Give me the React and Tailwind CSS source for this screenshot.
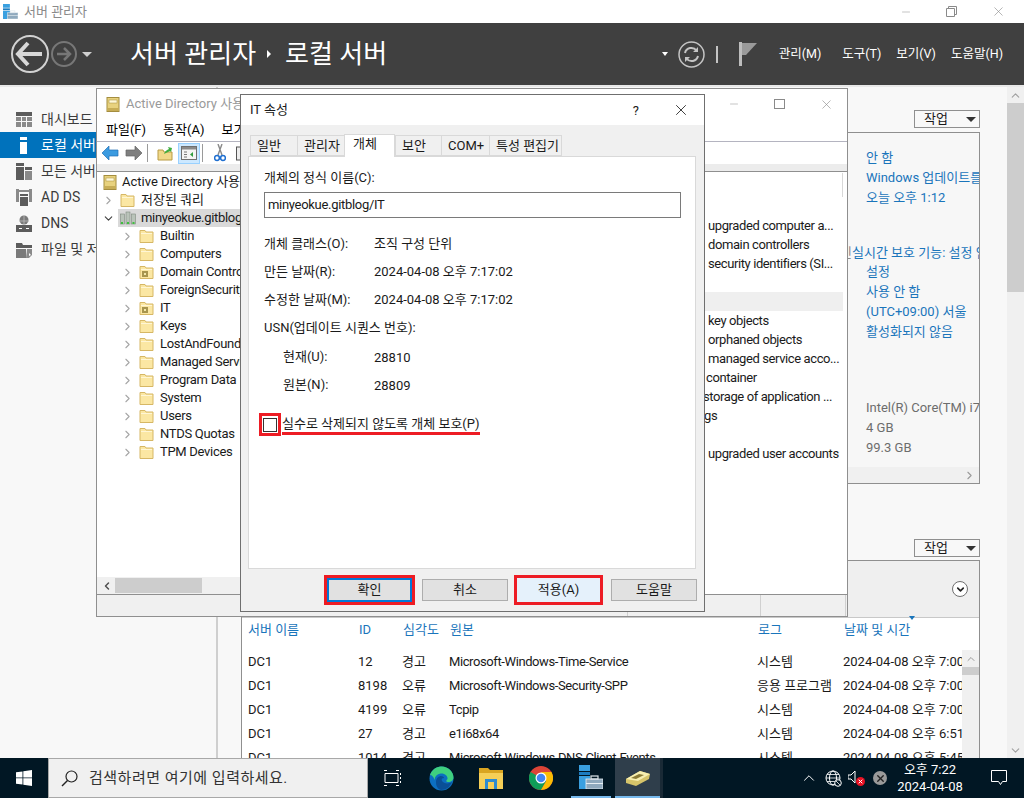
import { ChevronRight, ChevronDown, ChevronUp, ChevronLeft, X, Minus } from 'lucide-react';

const navItems = [
  { label: '대시보드', icon: 'dash' },
  { label: '로컬 서버', icon: 'local', active: true },
  { label: '모든 서버', icon: 'all' },
  { label: 'AD DS', icon: 'ad' },
  { label: 'DNS', icon: 'dns' },
  { label: '파일 및 저장소 서비스', icon: 'file' },
];

const treeItems = [
  { label: 'Builtin' },
  { label: 'Computers' },
  { label: 'Domain Controllers', ou: true },
  { label: 'ForeignSecurityPrincipals' },
  { label: 'IT', ou: true },
  { label: 'Keys' },
  { label: 'LostAndFound' },
  { label: 'Managed Service Accounts' },
  { label: 'Program Data' },
  { label: 'System' },
  { label: 'Users' },
  { label: 'NTDS Quotas' },
  { label: 'TPM Devices' },
];

// rows of the list pane; most of each row sits under the dialog
const listRows = [
  { text: 'upgraded computer a...', cls: 'pl-[3px]' },
  { text: 'domain controllers', cls: 'pl-[3px]' },
  { text: 'security identifiers (SI...', cls: 'pl-[3px]' },
  { text: '', cls: '' },
  { text: '', cls: 'bg-[#efefef]' },
  { text: 'key objects', cls: 'pl-[3px]' },
  { text: 'orphaned objects', cls: 'pl-[3px]' },
  { text: 'managed service acco...', cls: 'pl-[3px]' },
  { text: 'container', cls: 'pl-[1px]' },
  { text: 'storage of application ...', cls: '-ml-[2px]' },
  { text: 'gs', cls: '-ml-[1px]' },
  { text: '', cls: '' },
  { text: 'upgraded user accounts', cls: 'pl-[3px]' },
];

const events = [
  ['DC1', '12', '경고', 'Microsoft-Windows-Time-Service', '시스템', '2024-04-08 오후 7:00:12'],
  ['DC1', '8198', '오류', 'Microsoft-Windows-Security-SPP', '응용 프로그램', '2024-04-08 오후 7:00:05'],
  ['DC1', '4199', '오류', 'Tcpip', '시스템', '2024-04-08 오후 7:00:03'],
  ['DC1', '27', '경고', 'e1i68x64', '시스템', '2024-04-08 오후 6:51:10'],
  ['DC1', '1014', '경고', 'Microsoft-Windows-DNS-Client-Events', '시스템', '2024-04-08 오후 5:45:20'],
];

function NavIcon({ type }) {
  const c = '#5c5c5c';
  return (
    <svg width="17" height="17" viewBox="0 0 17 17">
      {type === 'dash' && (
        <>
          <rect x="0" y="1" width="16" height="4" fill={c} />
          <rect x="0" y="6" width="5" height="4" fill="#8a8a8a" />
          <rect x="6" y="6" width="4" height="4" fill="#8a8a8a" />
          <rect x="11" y="6" width="5" height="4" fill="#8a8a8a" />
          <rect x="0" y="11" width="5" height="5" fill="#8a8a8a" />
          <rect x="6" y="11" width="4" height="5" fill="#8a8a8a" />
          <rect x="11" y="11" width="5" height="5" fill="#8a8a8a" />
        </>
      )}
      {type === 'local' && (
        <>
          <rect x="4" y="0" width="7" height="3" fill="#fff" />
          <rect x="4" y="5" width="7" height="12" fill="#fff" />
        </>
      )}
      {type === 'all' && (
        <>
          <rect x="0" y="0" width="8" height="3" fill={c} />
          <rect x="0" y="4" width="8" height="13" fill={c} />
          <rect x="9" y="4" width="7" height="3" fill={c} />
          <rect x="9" y="8" width="7" height="9" fill="#8a8a8a" />
        </>
      )}
      {type === 'ad' && (
        <>
          <rect x="0" y="0" width="3" height="13" fill="#8a8a8a" />
          <rect x="13" y="0" width="3" height="13" fill="#8a8a8a" />
          <rect x="3" y="1" width="10" height="2" fill="#8a8a8a" />
          <rect x="4" y="5" width="8" height="2" fill={c} />
          <rect x="4" y="8" width="8" height="9" fill={c} />
        </>
      )}
      {type === 'dns' && (
        <>
          <circle cx="8" cy="5" r="4.5" fill="#7a7a7a" />
          <path d="M3 6h10M8 1v8" stroke="#bdbdbd" strokeWidth="0.8" />
          <rect x="0" y="10" width="16" height="7" fill={c} />
          <rect x="3" y="13" width="3" height="1" fill="#fff" />
          <rect x="10" y="13" width="3" height="1" fill="#fff" />
        </>
      )}
      {type === 'file' && (
        <>
          <path d="M0 2h6l1 2h9v3H0z" fill={c} />
          <rect x="0" y="8" width="10" height="9" fill="#7a7a7a" />
          <path d="M11 8h5v6l-3 3h-3z" fill="#8a8a8a" />
          <path d="M13 12l2 2-2 1z" fill="#fff" />
        </>
      )}
    </svg>
  );
}

function ServerIcon({ size = 15 }) {
  return (
    <svg width={size} height={size} viewBox="0 0 24 24">
      <rect x="0" y="0" width="11" height="6" fill="#3aa0e0" />
      <rect x="0" y="7" width="11" height="3" fill="#1c7cc0" />
      <rect x="0" y="11" width="11" height="13" fill="#3aa0e0" />
      <rect x="7" y="14" width="17" height="10" fill="#8fa9bd" stroke="#e6eef3" strokeWidth="0.8" />
      <rect x="12" y="11" width="7" height="3" fill="none" stroke="#dfe7ec" strokeWidth="1.2" />
      <rect x="7" y="18" width="17" height="1" fill="#e6eef3" />
    </svg>
  );
}

function Folder({ ou }) {
  return (
    <svg width="15" height="14" viewBox="0 0 15 14" className="shrink-0">
      <path d="M1 3V1.5h5L7 3h7v10.5H1z" fill="#fbe7a3" stroke="#d6b765" />
      <path d="M2 4.5h11" stroke="#fff6d5" />
      {ou && (
        <>
          <rect x="3" y="6" width="6" height="6" fill="#a8954e" />
          <rect x="5" y="8" width="2" height="2" fill="#f3e7a9" />
        </>
      )}
    </svg>
  );
}

function BookIcon() {
  return (
    <svg width="14" height="15" viewBox="0 0 14 15">
      <rect x="1" y="0.5" width="12" height="14" fill="#e8d27e" stroke="#a48d3f" />
      <rect x="3" y="3" width="8" height="3" fill="#fff9d8" stroke="#a48d3f" strokeWidth="0.5" />
      <rect x="1" y="11" width="12" height="3" fill="#c7ad56" />
    </svg>
  );
}

function Toolbar() {
  return (
    <div className="h-[23px] flex items-center pl-[5px] bg-white border-t border-[#b4b4c0]">
      <svg width="17" height="16" viewBox="0 0 17 16">
        <path d="M0 8l7-7v4h9v6H7v4z" fill="#3b9be0" stroke="#1f6fb5" strokeWidth="0.7" />
      </svg>
      <svg width="17" height="16" viewBox="0 0 17 16" className="ml-[6px]">
        <path d="M17 8l-7-7v4H1v6h9v4z" fill="#7f7f7f" stroke="#666" strokeWidth="0.7" />
      </svg>
      <div className="w-px h-[18px] bg-[#9a9a9a] ml-[5px]" />
      <svg width="16" height="16" viewBox="0 0 16 16" className="ml-[9px]">
        <path d="M1 5h5l1 2h8v8H1z" fill="#f1d98a" stroke="#b99b44" />
        <path d="M7 9c1-3 3-4 5-5l-1-2 4 1-1 4-1-1c-2 1-4 2-6 3z" fill="#3fae3f" />
      </svg>
      <div className="w-[22px] h-[21px] ml-[5px] bg-[#cce8ff] border border-[#99d1ff] flex items-center justify-center">
        <svg width="16" height="14" viewBox="0 0 16 14">
          <rect x="0.5" y="0.5" width="15" height="13" fill="#f4f4f4" stroke="#6f6f6f" />
          <rect x="1" y="1" width="14" height="2.5" fill="#8a8a8a" />
          <path d="M3 6h3M3 8.5h3M3 11h3" stroke="#777" />
          <path d="M12 6v5l-3-2.5z" fill="#2f9e3f" />
        </svg>
      </div>
      <div className="w-px h-[18px] bg-[#9a9a9a] ml-[2px]" />
      <svg width="12" height="18" viewBox="0 0 12 18" className="ml-[11px]">
        <path d="M8 0L4 11M4 0l4 11" stroke="#8a8a8a" strokeWidth="1.4" />
        <circle cx="3" cy="14" r="2.4" fill="none" stroke="#1f6fd0" strokeWidth="1.5" />
        <circle cx="9" cy="14" r="2.4" fill="none" stroke="#1f6fd0" strokeWidth="1.5" />
      </svg>
      <svg width="12" height="16" viewBox="0 0 12 16" className="ml-[10px]">
        <rect x="0.5" y="2" width="11" height="13" fill="#eee" stroke="#555" />
      </svg>
    </div>
  );
}

function ActiveDirectoryWindow() {
  return (
    <div className="absolute left-[96px] top-[88px] w-[752px] h-[529px] bg-[#f0f0f0] border border-[#8f8f8f] flex flex-col">
      <div className="h-[30px] bg-white flex items-center pl-[9px] text-[#9a9a9a]">
        <BookIcon />
        <span className="ml-[6px] whitespace-nowrap">Active Directory 사용자 및 컴퓨터</span>
        <div className="ml-auto flex items-center text-[#8a8a8a]">
          <Minus size={12} strokeWidth={1} />
          <div className="w-[11px] h-[10px] border border-[#8a8a8a] ml-[34px]" />
          <X size={15} strokeWidth={1} className="ml-[34px] mr-[13px]" />
        </div>
      </div>
      <div className="h-[22px] bg-white flex items-center gap-[17px] pl-[9px] text-black">
        <span>파일(F)</span>
        <span>동작(A)</span>
        <span>보기(V)</span>
      </div>
      <Toolbar />
      <div className="h-[7px] bg-[#ececec]" />
      <div className="h-[423px] flex bg-white border-t border-[#8f8f8f] border-l-0">
        <div className="flex-1 min-w-0 flex flex-col">
          <div className="flex-1 overflow-hidden pt-[1px] text-[#1a1a1a]">
            <div className="h-[18px] flex items-center pl-[6px] whitespace-nowrap">
              <BookIcon />
              <span className="ml-[5px]">Active Directory 사용자 및 컴퓨터</span>
            </div>
            <div className="h-[18px] flex items-center pl-[5px] whitespace-nowrap">
              <ChevronRight size={13} className="text-[#a6a6a6] shrink-0" />
              <span className="ml-[5px]"><Folder /></span>
              <span className="ml-[6px]">저장된 쿼리</span>
            </div>
            <div className="h-[18px] flex items-center pl-[5px] whitespace-nowrap">
              <ChevronDown size={13} className="text-[#404040] shrink-0" />
              <div className="flex items-center ml-[3px] pl-[2px] bg-[#d9d9d9] h-[18px] flex-1">
                <svg width="16" height="14" viewBox="0 0 16 14" className="shrink-0">
                  <rect x="0.5" y="3" width="4" height="10" fill="#b9c3b9" stroke="#7f8a7f" strokeWidth="0.6" />
                  <rect x="6" y="1" width="4" height="12" fill="#b9c3b9" stroke="#7f8a7f" strokeWidth="0.6" />
                  <rect x="11.5" y="3" width="4" height="10" fill="#b9c3b9" stroke="#7f8a7f" strokeWidth="0.6" />
                  <rect x="1" y="11" width="2" height="2" fill="#3fbf3f" />
                  <rect x="7" y="11" width="2" height="2" fill="#3fbf3f" />
                  <rect x="12.5" y="11" width="2" height="2" fill="#3fbf3f" />
                </svg>
                <span className="ml-[5px] tracking-[-0.3px]">minyeokue.gitblog</span>
              </div>
            </div>
            {treeItems.map((item) => (
              <div key={item.label} className="h-[18px] flex items-center pl-[24px] whitespace-nowrap">
                <ChevronRight size={13} className="text-[#a6a6a6] shrink-0" />
                <span className="ml-[5px]"><Folder ou={item.ou} /></span>
                <span className="ml-[6px] tracking-[-0.3px]">{item.label}</span>
              </div>
            ))}
          </div>
          <div className="h-[17px] bg-[#f0f0f0] flex items-center">
            <ChevronLeft size={12} strokeWidth={3} className="text-[#505050] ml-[4px]" />
            <div className="w-[87px] h-[15px] bg-[#cdcdcd] ml-[2px]" />
          </div>
        </div>
        <div className="w-[142px] overflow-hidden pt-[44px] pr-[4px] text-[#1a1a1a] relative tracking-[-0.4px]">
          <div className="absolute right-[4px] top-[1px] w-px h-[24px] bg-[#d8d8d8]" />
          {listRows.map((row, i) => (
            <div key={i} className={`h-[19px] leading-[19px] whitespace-nowrap ${row.cls}`}>
              {row.text}
            </div>
          ))}
        </div>
      </div>
      <div className="flex-1 flex bg-[#f0f0f0] border-t border-[#8f8f8f]">
        <div className="w-[530px]" />
        <div className="w-px bg-[#d0d0d0]" />
        <div className="w-[132px]" />
        <div className="w-px bg-[#d0d0d0]" />
        <div className="w-[84px]" />
        <div className="w-px bg-[#d0d0d0]" />
      </div>
    </div>
  );
}

function DialogButton({ children, frame }) {
  if (frame === 'ok') {
    return (
      <div className="w-[91px] h-[30px] border-[3px] border-[#ed1c24]">
        <div className="w-full h-full border-[2px] border-[#0078d7] bg-[#e1e1e1] flex items-center justify-center">{children}</div>
      </div>
    );
  }
  if (frame === 'apply') {
    return (
      <div className="w-[89px] h-[30px] border-[3px] border-[#ed1c24] bg-[#e5f1fb] flex items-center justify-center">{children}</div>
    );
  }
  return (
    <div className="w-[86px] h-[22px] border border-[#adadad] bg-[#e1e1e1] flex items-center justify-center">{children}</div>
  );
}

function PropertiesDialog() {
  const tabs = [
    ['일반', 'w-[47px]'],
    ['관리자', 'w-[47px]'],
    ['개체', 'w-[51px]'],
    ['보안', 'w-[46px]'],
    ['COM+', 'w-[48px]'],
    ['특성 편집기', 'w-[73px]'],
  ];
  return (
    <div className="absolute left-[240px] top-[94px] w-[465px] h-[518px] bg-[#f0f0f0] border border-[#6f6f6f] flex flex-col text-[#1a1a1a]">
      <div className="h-[30px] bg-white flex items-center pl-[9px]">
        <span>IT 속성</span>
        <span className="ml-auto mr-[33px] text-[13px] leading-none">?</span>
        <X size={18} strokeWidth={1} className="text-black mr-[14px]" />
      </div>
      <div className="h-[31px] flex items-end pl-[9px] pt-[8px]">
        {tabs.map(([label, w]) =>
          label === '개체' ? (
            <div key={label} className={`${w} h-[23px] -mt-[2px] bg-white border border-[#d9d9d9] border-b-0 flex items-center pl-[8px] relative z-10 -mb-px pb-[4px]`}>
              {label}
            </div>
          ) : (
            <div key={label} className={`${w} h-[21px] bg-[#f0f0f0] border-y border-l last:border-r border-[#d9d9d9] flex items-center pl-[6px] whitespace-nowrap`}>
              {label}
            </div>
          )
        )}
      </div>
      <div className="w-[448px] h-[413px] ml-[7px] bg-white border border-[#d9d9d9] px-[15px] pt-[11px]">
        <div className="h-[20px] flex items-center">개체의 정식 이름(C):</div>
        <div className="w-[417px] h-[26px] mt-[4px] border border-[#7a7a7a] flex items-center pl-[3px] tracking-[-0.3px]">minyeokue.gitblog/IT</div>
        <div className="grid grid-cols-[110px_1fr] mt-[12px] auto-rows-[28px] items-center">
          <span>개체 클래스(O):</span>
          <span>조직 구성 단위</span>
          <span>만든 날짜(R):</span>
          <span>2024-04-08 오후 7:17:02</span>
          <span>수정한 날짜(M):</span>
          <span>2024-04-08 오후 7:17:02</span>
          <span className="col-span-2">USN(업데이트 시퀀스 번호):</span>
          <span className="pl-[19px] pt-[1px]">현재(U):</span>
          <span className="pt-[3px]">28810</span>
          <span className="pl-[19px] pt-[1px]">원본(N):</span>
          <span className="pt-[3px]">28809</span>
        </div>
        <div className="flex items-center mt-[15px] -ml-[5px]">
          <div className="w-[22px] h-[23px] border-[3px] border-[#ed1c24] flex items-center justify-center">
            <div className="w-[14px] h-[14px] border border-[#333] bg-white" />
          </div>
          <div className="ml-px border-b-[3px] border-[#ed1c24] h-[20px] leading-[18px] mt-[1px] whitespace-nowrap">실수로 삭제되지 않도록 개체 보호(P)</div>
        </div>
      </div>
      <div className="flex items-center justify-end flex-1 pr-[7px] text-[#1a1a1a]">
        <DialogButton frame="ok">확인</DialogButton>
        <div className="ml-[7px]"><DialogButton>취소</DialogButton></div>
        <div className="ml-[6px]"><DialogButton frame="apply">적용(A)</DialogButton></div>
        <div className="ml-[8px]"><DialogButton>도움말</DialogButton></div>
      </div>
    </div>
  );
}

function Header() {
  return (
    <div className="h-[62px] bg-[#404040] flex items-center text-white shrink-0">
      <svg width="40" height="40" viewBox="0 0 40 40" className="ml-[10px]">
        <circle cx="20" cy="20" r="18" fill="none" stroke="#d2d2d2" strokeWidth="2" />
        <path d="M8 20h24M18 9L8 20l10 11" fill="none" stroke="#d8d8d8" strokeWidth="4" />
      </svg>
      <svg width="26" height="26" viewBox="0 0 26 26" className="ml-px">
        <circle cx="13" cy="13" r="12" fill="none" stroke="#777" strokeWidth="2" />
        <path d="M6 13h13M13 7l6 6-6 6" fill="none" stroke="#777" strokeWidth="2.5" />
      </svg>
      <div className="ml-[5px] w-0 h-0 border-l-[5px] border-r-[5px] border-t-[5px] border-l-transparent border-r-transparent border-t-[#d0d0d0]" />
      <span className="ml-[38px] text-[26px] leading-none whitespace-nowrap">서버 관리자</span>
      <div className="ml-[11px] w-0 h-0 border-t-[4px] border-b-[4px] border-l-[4px] border-t-transparent border-b-transparent border-l-white" />
      <span className="ml-[14px] text-[26px] leading-none whitespace-nowrap">로컬 서버</span>
      <div className="ml-[275px] w-0 h-0 border-l-[3.5px] border-r-[3.5px] border-t-[4px] border-l-transparent border-r-transparent border-t-white" />
      <svg width="27" height="27" viewBox="0 0 27 27" className="ml-[10px]">
        <circle cx="13.5" cy="13.5" r="12.5" fill="none" stroke="#c4c4c4" strokeWidth="1.5" />
        <path d="M7 12a6.5 6.5 0 0 1 11.500-2.500M20 15a6.500 6.500 0 0 1-11.500 2.500" fill="none" stroke="#c4c4c4" strokeWidth="2" />
        <path d="M20 6v5h-5zM7 21v-5h5z" fill="#c4c4c4" />
      </svg>
      <div className="ml-[11px] w-[2px] h-[17px] bg-[#c4c4c4]" />
      <svg width="18" height="24" viewBox="0 0 18 24" className="ml-[21px]">
        <rect x="0" y="0" width="3" height="24" fill="#bdbdbd" />
        <path d="M3 1h15l-11 12H3z" fill="#9a9a9a" />
      </svg>
      <div className="flex items-center ml-auto mr-[21px] text-[12.5px] text-white whitespace-nowrap">
        <span>관리(M)</span>
        <span className="ml-[21px]">도구(T)</span>
        <span className="ml-[15px]">보기(V)</span>
        <span className="ml-[15px]">도움말(H)</span>
      </div>
    </div>
  );
}

function TasksButton() {
  return (
    <div className="w-[66px] h-[18px] ml-auto border border-[#8f8f8f] bg-[#f8f8f8] flex items-center pl-[9px] text-[#1a1a1a]">
      <span>작업</span>
      <div className="ml-auto mr-[3px] w-0 h-0 border-l-[5px] border-r-[5px] border-t-[5px] border-l-transparent border-r-transparent border-t-[#333]" />
    </div>
  );
}

function PropertiesBox() {
  const link = 'h-5 leading-5 whitespace-nowrap text-[#1a75bb]';
  const plain = 'h-5 leading-5 whitespace-nowrap text-[#6d6d6d]';
  return (
    <div className="h-[352px] mt-[4px] border border-[#8f8f8f] bg-[#f7f7f7] overflow-hidden flex flex-col">
      <div className="flex-1 pl-[624px] pt-[15px]">
        <div className={link}>안 함</div>
        <div className={link}>Windows 업데이트를 사용하여 업데이트 설치</div>
        <div className={`${link} h-[19px]`}>오늘 오후 1:12</div>
        <div className={`${link} mt-[36px] flex h-[19px]`}>
          <span className="-ml-[26px] w-[26px] text-[#8a8a8a]">신</span>
          <span>실시간 보호 기능: 설정 안 함</span>
        </div>
        <div className={link}>설정</div>
        <div className={link}>사용 안 함</div>
        <div className={link}>(UTC+09:00) 서울</div>
        <div className={link}>활성화되지 않음</div>
        <div className={`${plain} mt-[56px]`}>Intel(R) Core(TM) i7-4790 CPU</div>
        <div className={plain}>4 GB</div>
        <div className={plain}>99.3 GB</div>
      </div>
      <div className="h-[16px] bg-[#f0f0f0] flex items-center justify-end pr-[3px]">
        <ChevronRight size={13} className="text-[#9a9a9a]" />
      </div>
    </div>
  );
}

function EventsBox() {
  const cols = 'grid grid-cols-[110px_44px_47px_308px_86px_1fr] pl-[6px]';
  const headers = ['서버 이름', 'ID', '심각도', '원본', '로그', '날짜 및 시간'];
  return (
    <div className="flex-1 mt-[3px] min-h-0 border border-[#8f8f8f] border-b-0 bg-white overflow-hidden flex flex-col">
      <div className="h-[57px] bg-[#efefef] border-b border-[#c8c8c8] flex items-center justify-end pr-[11px] shrink-0">
        <div className="w-[16px] h-[16px] rounded-full border border-[#6f6f6f] bg-white flex items-center justify-center">
          <ChevronDown size={11} strokeWidth={3.5} className="text-[#222]" />
        </div>
      </div>
      <div className={`${cols} h-[24px] items-center text-[#1a75bb] shrink-0`}>
        {headers.map((h, i) => (
          <div key={h} className={`relative whitespace-nowrap ${i > 0 ? 'pl-[1px]' : ''}`}>
            {h}
            {i === 5 && <div className="absolute left-[66px] -top-[4px] w-0 h-0 border-l-[3.5px] border-r-[3.5px] border-t-[4px] border-l-transparent border-r-transparent border-t-[#1a75bb]" />}
          </div>
        ))}
      </div>
      <div className="flex flex-1 min-h-0 mt-[8px]">
        <div className="flex-1 min-w-0 overflow-hidden text-[#1a1a1a]">
          {events.map((row, i) => (
            <div key={i} className={`${cols} h-[24px] items-center whitespace-nowrap`}>
              {row.map((cell, j) => (
                <div key={j} className={j === 3 ? 'tracking-[-0.4px]' : ''}>{cell}</div>
              ))}
            </div>
          ))}
        </div>
        <div className="w-[17px] bg-[#f0f0f0] shrink-0 flex flex-col items-center">
          <ChevronUp size={12} strokeWidth={2} className="text-[#9a9a9a] mt-[3px]" />
          <div className="w-full h-[8px] bg-[#cdcdcd] mt-[2px]" />
        </div>
      </div>
    </div>
  );
}

function Taskbar() {
  return (
    <div className="h-[40px] bg-[#011724] flex items-stretch shrink-0 text-white">
      <div className="w-[48px] flex items-center justify-center">
        <svg width="16" height="16" viewBox="0 0 16 16">
          <path d="M0 2.300L6.500 1.400V7.500H0zM7.300 1.300L16 0V7.500H7.300zM0 8.300H6.500V14.600L0 13.700zM7.300 8.300H16V16L7.300 14.800z" fill="#fff" />
        </svg>
      </div>
      <div className="w-[320px] bg-[#f0f0f0] border border-[#a8a8a8] flex items-center pl-[12px] text-[#333] text-[15px] whitespace-nowrap">
        <svg width="17" height="17" viewBox="0 0 17 17">
          <circle cx="10.500" cy="6.500" r="5.500" fill="none" stroke="#222" strokeWidth="1.200" />
          <path d="M6.500 10.500L1 16" stroke="#222" strokeWidth="1.400" />
        </svg>
        <span className="ml-[11px] tracking-[0.5px]">검색하려면 여기에 입력하세요.</span>
      </div>
      <div className="w-[49px] flex items-center justify-center">
        <svg width="17" height="16" viewBox="0 0 17 16">
          <path d="M0 .5h3M0 15.500h3M12 .5h3M12 15.500h3M1 3.500h13v9H1z" fill="none" stroke="#fff" strokeWidth="1" />
          <path d="M16.500 3v2M16.500 7v2M16.500 11v2" stroke="#fff" strokeWidth="1" />
        </svg>
      </div>
      <div className="w-[49px] flex items-center justify-center">
        <svg width="25" height="25" viewBox="0 0 25 25">
          <circle cx="12.500" cy="12.500" r="12" fill="#0c6fc1" />
          <path d="M1 9C3 3 8 .5 13 .5c6 0 11.500 5 11.500 11 0 3-3 5-6 4.500-2-.5-1-2 0-3 .5-3-3-6-7-5.500C8 8 6 10 5.500 14 5 11 3 9 1 9z" fill="#3fd07f" />
          <path d="M7 16c0-4 3-6 5-6s3 1 3 2c-2 0-3 1-2 3 2 3 7 3 10 1-2 5-6 8-11 8-4-1-5-5-5-8z" fill="#0a4f96" />
        </svg>
      </div>
      <div className="w-[50px] flex items-center justify-center">
        <svg width="24" height="22" viewBox="0 0 24 22">
          <path d="M0 1h9l2 2h13v3H0z" fill="#d9a521" />
          <rect x="0" y="6" width="24" height="16" fill="#f5cf57" />
          <rect x="6" y="12" width="12" height="10" fill="#2c8bd0" />
          <rect x="9" y="15" width="6" height="7" fill="#f5cf57" />
        </svg>
      </div>
      <div className="w-[50px] flex items-center justify-center">
        <svg width="24" height="24" viewBox="0 0 24 24">
          <circle cx="12" cy="12" r="12" fill="#db4437" />
          <path d="M12 12L1.600 6A12 12 0 0 0 12 24l5.200-9z" fill="#0f9d58" />
          <path d="M12 6h10.400A12 12 0 0 1 12 24l5.200-9z" fill="#fbbc05" />
          <circle cx="12" cy="12" r="5.500" fill="#fff" />
          <circle cx="12" cy="12" r="4.300" fill="#4285f4" />
        </svg>
      </div>
      <div className="w-[49px] flex flex-col items-center justify-end">
        <div className="flex-1 flex items-center"><ServerIcon size={24} /></div>
        <div className="w-[40px] h-[2px] bg-[#76b9ed]" />
      </div>
      <div className="w-[45px] bg-[#2f3e4b] flex flex-col items-center">
        <div className="flex-1 flex items-center">
          <svg width="24" height="17" viewBox="0 0 24 17">
            <path d="M0 10L14 2l10 3-1 5-13 7-10-3z" fill="#d6c46a" />
            <path d="M0 10L14 2l10 3-12 7z" fill="#f7efb0" />
            <path d="M5 9l8-4 5 1-8 4z" fill="#8a7a35" />
          </svg>
        </div>
        <div className="w-full h-[2px] bg-[#76b9ed]" />
      </div>
      <div className="w-[3px] bg-[#1a2a36]" />
      <div className="flex-1 flex items-center text-white">
        <ChevronUp size={18} strokeWidth={1.3} className="ml-[137px]" />
        <svg width="17" height="17" viewBox="0 0 17 17" className="ml-[7px]">
          <circle cx="8" cy="8" r="7" fill="none" stroke="#fff" strokeWidth="1" />
          <ellipse cx="8" cy="8" rx="3.500" ry="7" fill="none" stroke="#fff" strokeWidth="1" />
          <path d="M1 8h14M2 4.500h12M2 11.500h12" stroke="#fff" strokeWidth="0.800" />
          <circle cx="13" cy="13" r="3.300" fill="#011724" stroke="#fff" strokeWidth="1" />
          <path d="M11 11l4 4" stroke="#fff" strokeWidth="0.800" />
        </svg>
        <svg width="17" height="16" viewBox="0 0 17 16" className="ml-[6px]">
          <path d="M0 5h3l4-4v12l-4-4H0z" fill="none" stroke="#fff" strokeWidth="1" />
          <circle cx="12.500" cy="11.500" r="4.500" fill="#e81123" />
          <path d="M10.700 9.700l3.600 3.600M14.300 9.700l-3.600 3.600" stroke="#fff" strokeWidth="1" />
        </svg>
        <div className="ml-[8px] w-[14px] h-[14px] rounded-full bg-[#9a9a9a] flex items-center justify-center">
          <X size={11} strokeWidth={3} className="text-[#222]" />
        </div>
        <div className="w-[78px] ml-[4px] flex flex-col items-center text-[13px] leading-[17px] whitespace-nowrap">
          <span>오후 7:22</span>
          <span>2024-04-08</span>
        </div>
        <svg width="17" height="16" viewBox="0 0 17 16" className="ml-[22px]">
          <path d="M.5.5h15v11h-4l-2 3-2-3h-7z" fill="none" stroke="#fff" strokeWidth="1" />
        </svg>
      </div>
    </div>
  );
}

export default function App() {
  return (
    <div className="relative w-[1024px] h-[798px] overflow-hidden bg-white flex flex-col text-[13px] font-['Roboto','Noto_Sans_CJK_KR',sans-serif]">
      <div className="h-[23px] bg-white flex items-center shrink-0">
        <span className="ml-[3px]"><ServerIcon /></span>
        <span className="ml-[6px] text-[#8a8a8a]">서버 관리자</span>
        <div className="ml-auto flex items-center text-[#8a8a8a]">
          <Minus size={12} strokeWidth={1} className="mr-[34px]" />
          <svg width="11" height="11" viewBox="0 0 11 11" className="mr-[34px]">
            <path d="M.5 2.500h8v8h-8zM2.500 2.500V.5h8v8H8.500" fill="none" stroke="#8a8a8a" />
          </svg>
          <X size={15} strokeWidth={1} className="mr-[18px]" />
        </div>
      </div>
      <Header />
      <div className="flex-1 min-h-0 flex border-t-2 border-[#e8e8e8]">
        <div className="w-[216px] shrink-0 bg-[#f8f8f8] pt-[19px] text-[14px] text-[#3c3c3c]">
          {navItems.map((item) => (
            <div
              key={item.label}
              className={
                item.active
                  ? 'h-[26px] flex items-center pl-[16px] bg-[#0072bc] text-white whitespace-nowrap'
                  : 'h-[26px] flex items-center pl-[16px] whitespace-nowrap'
              }
            >
              <NavIcon type={item.icon} />
              <span className="ml-[8px]">{item.label}</span>
            </div>
          ))}
        </div>
        <div className="w-[2px] bg-[#cfcfcf]" />
        <div className="flex-1 min-w-0 bg-[#f8f8f8] pl-[23px] pr-[27px] pt-[23px] flex flex-col">
          <TasksButton />
          <PropertiesBox />
          <div className="mt-[55px]"><TasksButton /></div>
          <EventsBox />
        </div>
        <div className="w-[17px] bg-[#f0f0f0] flex flex-col items-center shrink-0">
          <ChevronUp size={13} className="text-[#a0a0a0] mt-[2px]" />
          <div className="w-full h-[189px] bg-[#cdcdcd] mt-px" />
          <ChevronDown size={13} className="text-[#a0a0a0] mt-auto mb-[1px]" />
        </div>
      </div>
      <Taskbar />
      <ActiveDirectoryWindow />
      <PropertiesDialog />
    </div>
  );
}
